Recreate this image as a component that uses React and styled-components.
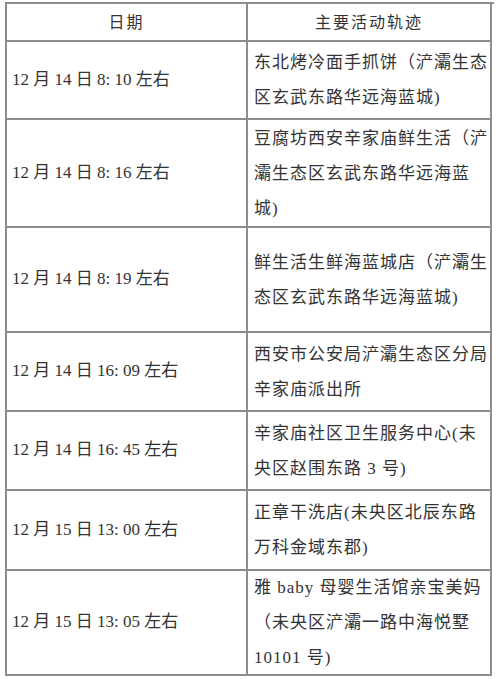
import React from "react";
import styled, { createGlobalStyle } from "styled-components";

const Global = createGlobalStyle`
  html, body { margin: 0; padding: 0; background: #ffffff; }
  body {
    width: 500px;
    height: 679px;
    overflow: hidden;
    font-family: "Liberation Serif", "Noto Sans CJK SC", serif;
    color: #333333;
  }
`;

const Page = styled.div`
  padding: 2px 0 0 5px;
`;

const Table = styled.div`
  width: 487px;
  border-top: 2px solid #8c8c8c;
  border-left: 2px solid #8c8c8c;
  display: flex;
  flex-direction: column;
`;

const Row = styled.div`
  display: grid;
  grid-template-columns: 241px 244px;
  height: ${(p) => p.$h}px;
`;

const Cell = styled.div`
  border-right: 2px solid #8c8c8c;
  border-bottom: 2px solid #8c8c8c;
  display: flex;
  flex-direction: column;
  justify-content: center;
  font-size: 17px;
  letter-spacing: 1px;
  line-height: 35px;
  white-space: nowrap;
  overflow: hidden;
`;

const HeadCell = styled(Cell)`
  align-items: center;
  letter-spacing: 2px;
  font-size: 16px;
`;

const DateCell = styled(Cell)`
  padding-left: 5px;
  padding-bottom: 2px;
  letter-spacing: 0;
`;

const PlaceCell = styled(Cell)`
  padding-left: 6px;
`;

const Line = styled.span`
  display: block;
`;

const rows = [
  { h: 78, date: "12 月 14 日 8: 10 左右", lines: ["东北烤冷面手抓饼（浐灞生态", "区玄武东路华远海蓝城)"] },
  { h: 108, date: "12 月 14 日 8: 16 左右", lines: ["豆腐坊西安辛家庙鲜生活（浐", "灞生态区玄武东路华远海蓝", "城)"] },
  { h: 105, date: "12 月 14 日 8: 19 左右", lines: ["鲜生活生鲜海蓝城店（浐灞生", "态区玄武东路华远海蓝城)"] },
  { h: 79, date: "12 月 14 日 16: 09 左右", lines: ["西安市公安局浐灞生态区分局", "辛家庙派出所"] },
  { h: 79, date: "12 月 14 日 16: 45 左右", lines: ["辛家庙社区卫生服务中心(未", "央区赵围东路 3 号)"] },
  { h: 80, date: "12 月 15 日 13: 00 左右", lines: ["正章干洗店(未央区北辰东路", "万科金域东郡)"] },
  { h: 105, date: "12 月 15 日 13: 05 左右", lines: ["雅 baby 母婴生活馆亲宝美妈", "（未央区浐灞一路中海悦墅", "10101 号)"] },
];

export default function App() {
  return (
    <>
      <Global />
      <Page>
        <Table>
          <Row $h={38}>
            <HeadCell>日期</HeadCell>
            <HeadCell>主要活动轨迹</HeadCell>
          </Row>
          {rows.map((r, i) => (
            <Row key={i} $h={r.h}>
              <DateCell>{r.date}</DateCell>
              <PlaceCell>
                {r.lines.map((l, j) => (
                  <Line key={j}>{l}</Line>
                ))}
              </PlaceCell>
            </Row>
          ))}
        </Table>
      </Page>
    </>
  );
}
